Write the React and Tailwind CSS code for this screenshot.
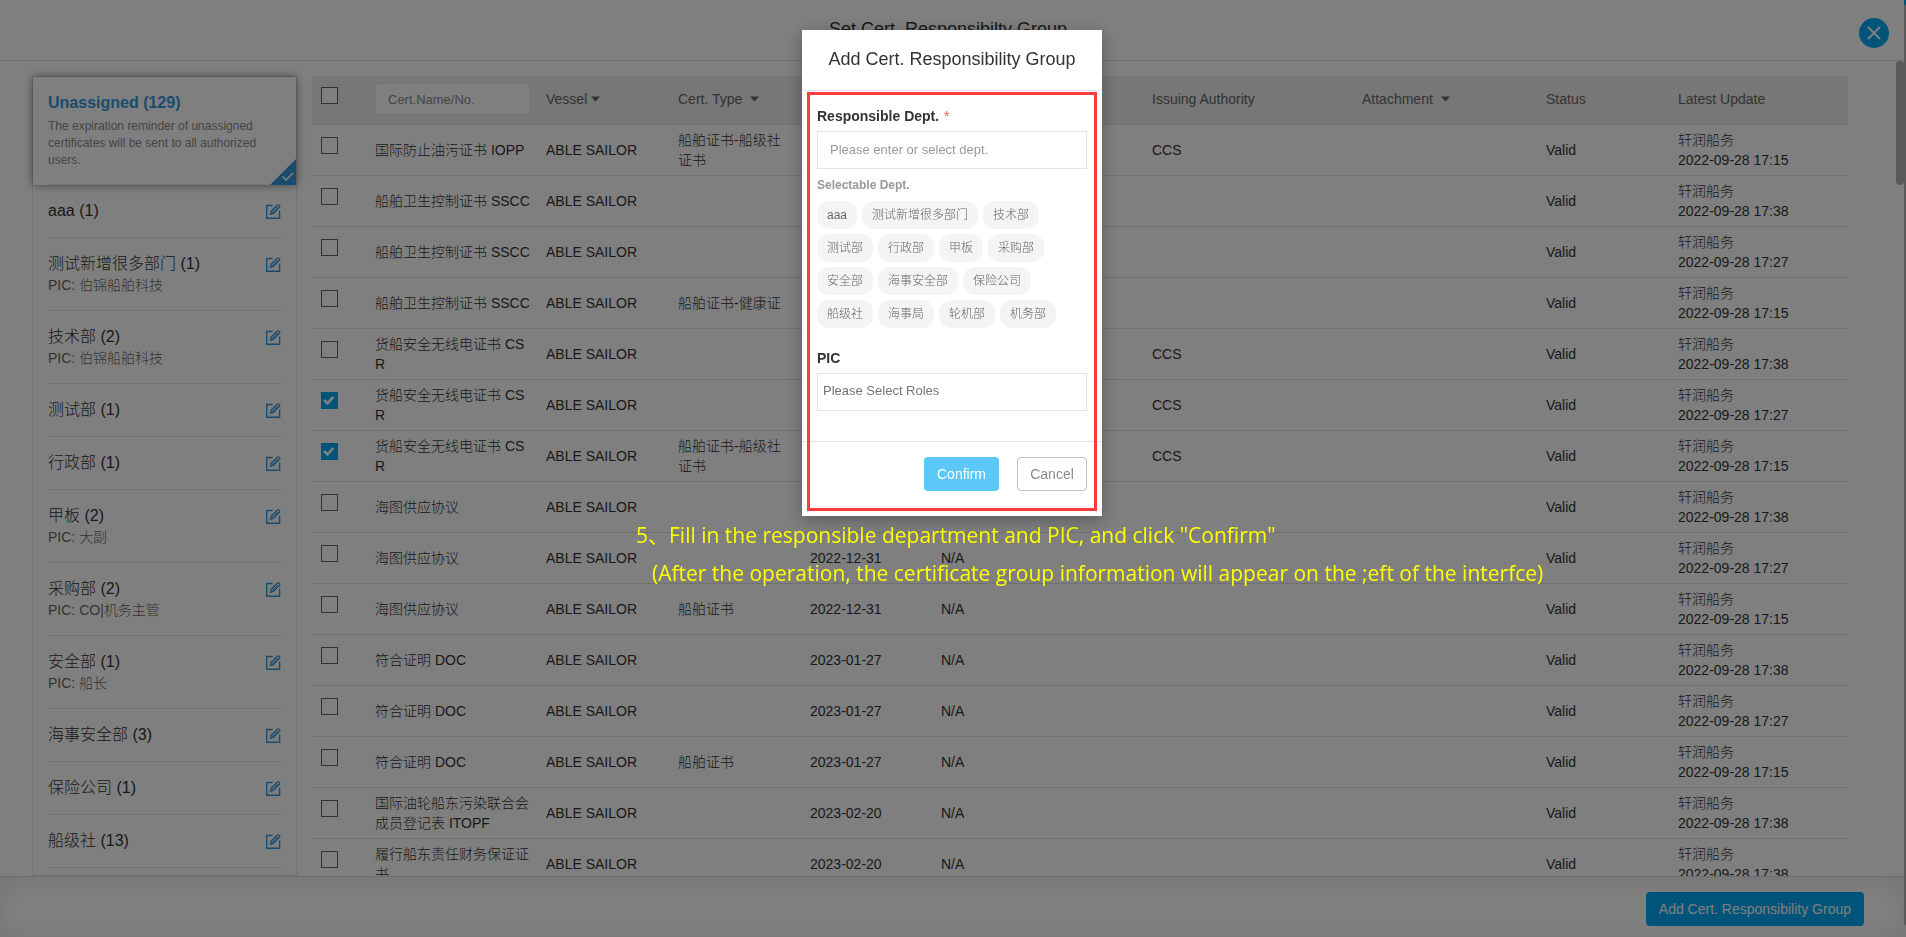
import { useState } from 'react';

const GROUPS = [
    { id: 1, name: 'aaa', count: 1 },
    { id: 2, name: '测试新增很多部门', count: 1, pic: '伯锦船舶科技' },
    { id: 3, name: '技术部', count: 2, pic: '伯锦船舶科技' },
    { id: 4, name: '测试部', count: 1 },
    { id: 5, name: '行政部', count: 1 },
    { id: 6, name: '甲板', count: 2, pic: '大副' },
    { id: 7, name: '采购部', count: 2, pic: 'CO|机务主管' },
    { id: 8, name: '安全部', count: 1, pic: '船长' },
    { id: 9, name: '海事安全部', count: 3 },
    { id: 10, name: '保险公司', count: 1 },
    { id: 11, name: '船级社', count: 13 },
];

const CERTS = [
    { id: 1, name: '国际防止油污证书 IOPP', type: '船舶证书-船级社证书', authority: 'CCS', time: '17:15' },
    { id: 2, name: '船舶卫生控制证书 SSCC', time: '17:38' },
    { id: 3, name: '船舶卫生控制证书 SSCC', time: '17:27' },
    { id: 4, name: '船舶卫生控制证书 SSCC', type: '船舶证书-健康证', time: '17:15' },
    { id: 5, name: '货船安全无线电证书 CSR', authority: 'CCS', time: '17:38' },
    { id: 6, name: '货船安全无线电证书 CSR', authority: 'CCS', time: '17:27' },
    { id: 7, name: '货船安全无线电证书 CSR', type: '船舶证书-船级社证书', authority: 'CCS', time: '17:15' },
    { id: 8, name: '海图供应协议', expiry: '2022-12-31', window: 'N/A', time: '17:38' },
    { id: 9, name: '海图供应协议', expiry: '2022-12-31', window: 'N/A', time: '17:27' },
    { id: 10, name: '海图供应协议', type: '船舶证书', expiry: '2022-12-31', window: 'N/A', time: '17:15' },
    { id: 11, name: '符合证明 DOC', expiry: '2023-01-27', window: 'N/A', time: '17:38' },
    { id: 12, name: '符合证明 DOC', expiry: '2023-01-27', window: 'N/A', time: '17:27' },
    { id: 13, name: '符合证明 DOC', type: '船舶证书', expiry: '2023-01-27', window: 'N/A', time: '17:15' },
    { id: 14, name: '国际油轮船东污染联合会成员登记表 ITOPF', expiry: '2023-02-20', window: 'N/A', time: '17:38' },
    { id: 15, name: '履行船东责任财务保证证书', expiry: '2023-02-20', window: 'N/A', time: '17:38' },
];

const DEPTS = [
    'aaa', '测试新增很多部门', '技术部', '测试部', '行政部', '甲板', '采购部',
    '安全部', '海事安全部', '保险公司', '船级社', '海事局', '轮机部', '机务部',
];

function EditIcon() {
    return (
        <svg width="16" height="15" viewBox="0 0 16 15" fill="none" stroke="currentColor" aria-hidden="true">
            <path d="M7.5 1.5H1.7V14.3H14.6V6.5" strokeWidth="1.4" />
            <path d="M5.4 10.3L6.2 7.2L12.3 1.2Q13.3 0.4 14.3 1.4Q15.2 2.4 14.4 3.3L8.4 9.4Z" strokeWidth="1.3" />
            <path d="M11.2 2.4L13.3 4.5M6.6 7.2L8.5 9.2M8 8L11.8 4.2" strokeWidth="1" />
        </svg>
    );
}

function Caret() {
    return (
        <svg width="9" height="6" viewBox="0 0 9 6" fill="currentColor" aria-hidden="true">
            <path d="M0 0.5H9L4.5 5.5Z" />
        </svg>
    );
}

function Checkbox({ label, checked, onChange }) {
    return (
        <label className="relative block size-[17px]">
            <input
                type="checkbox"
                aria-label={label}
                checked={checked}
                onChange={onChange}
                className="peer block size-[17px] appearance-none border border-[#596675] bg-white checked:border-[#00a9f4] checked:bg-[#00a9f4]"
            />
            <svg
                className="pointer-events-none absolute inset-0 hidden peer-checked:block"
                width="17"
                height="17"
                viewBox="0 0 17 17"
                fill="none"
                stroke="#fff"
                strokeWidth="2.6"
                aria-hidden="true"
            >
                <path d="M3 8L6.5 11.3L12.3 5" />
            </svg>
        </label>
    );
}

function Sidebar() {
    return (
        <aside className="w-[265px] shrink-0 border border-[#e6e6e6]">
            <div className="relative bg-white px-[15px] pt-[15px] shadow-[0_0_9px_rgba(0,0,0,0.5)]">
                <div className="h-[93px] border-b border-[#e6e6e6]">
                    <h2 className="text-base leading-[22px] font-bold text-[#3498db]">Unassigned (129)</h2>
                    <p className="mt-1 text-xs leading-[17px] text-[#8a8a8a]">
                        The expiration reminder of unassigned certificates will be sent to all authorized users.
                    </p>
                </div>
                <svg className="absolute right-0 bottom-0" width="26" height="26" viewBox="0 0 26 26" aria-hidden="true">
                    <path d="M26 0V26H0Z" fill="#3498db" />
                    <path d="M12.5 17.5L16 21L23 14" fill="none" stroke="#fff" strokeWidth="1.6" />
                </svg>
            </div>
            <ul className="px-[15px]">
                {GROUPS.map((group) => (
                    <li key={group.id} className="flex justify-between border-b border-[#e6e6e6] py-[15px]">
                        <div>
                            <div className="text-base leading-[22px]">
                                {group.name} ({group.count})
                            </div>
                            {group.pic && (
                                <div className="text-sm leading-5 text-[#666]">PIC: {group.pic}</div>
                            )}
                        </div>
                        <button type="button" aria-label={`Edit ${group.name}`} className="h-[22px] text-[#3498db]">
                            <EditIcon />
                        </button>
                    </li>
                ))}
            </ul>
        </aside>
    );
}

function CertTable() {
    const [selected, setSelected] = useState([6, 7]);
    const [search, setSearch] = useState('');

    const toggle = (id) => {
        setSelected(selected.includes(id) ? selected.filter((item) => item !== id) : [...selected, id]);
    };

    const toggleAll = () => {
        setSelected(selected.length === CERTS.length ? [] : CERTS.map((cert) => cert.id));
    };

    return (
        <table className="w-full table-fixed border-separate border-spacing-0 text-sm leading-5">
            <colgroup>
                <col className="w-[55px]" />
                <col className="w-[171px]" />
                <col className="w-[132px]" />
                <col className="w-[132px]" />
                <col className="w-[131px]" />
                <col className="w-[211px]" />
                <col className="w-[210px]" />
                <col className="w-[184px]" />
                <col className="w-[132px]" />
                <col className="w-[178px]" />
            </colgroup>
            <thead>
                <tr className="h-[49px] bg-[#eee] text-left text-[#666] *:border-b *:border-[#e0e0e0] *:px-2 *:pb-[2px] *:font-normal">
                    <th>
                        <div className="pb-2 pl-px">
                            <Checkbox
                                label="Select all"
                                checked={selected.length === CERTS.length}
                                onChange={toggleAll}
                            />
                        </div>
                    </th>
                    <th>
                        <input
                            type="text"
                            aria-label="Cert.Name/No."
                            placeholder="Cert.Name/No."
                            value={search}
                            onChange={(e) => setSearch(e.target.value)}
                            className="block h-8 w-full rounded border border-[#e6e6e6] bg-white px-3 text-[13px] placeholder:text-[#8a8a8a]"
                        />
                    </th>
                    <th>
                        <button type="button" className="flex items-center gap-1">
                            Vessel <Caret />
                        </button>
                    </th>
                    <th>
                        <button type="button" className="flex items-center gap-2">
                            Cert. Type <Caret />
                        </button>
                    </th>
                    <th />
                    <th />
                    <th>Issuing Authority</th>
                    <th>
                        <button type="button" className="flex items-center gap-2">
                            Attachment <Caret />
                        </button>
                    </th>
                    <th>Status</th>
                    <th>Latest Update</th>
                </tr>
            </thead>
            <tbody>
                {CERTS.map((cert) => (
                    <tr key={cert.id} className="h-[51px] *:border-b *:border-[#e0e0e0] *:px-2 *:break-all">
                        <td>
                            <div className="pb-[10px] pl-px">
                                <Checkbox
                                    label={`Select ${cert.name}`}
                                    checked={selected.includes(cert.id)}
                                    onChange={() => toggle(cert.id)}
                                />
                            </div>
                        </td>
                        <td>{cert.name}</td>
                        <td>ABLE SAILOR</td>
                        <td>{cert.type}</td>
                        <td>{cert.expiry}</td>
                        <td>{cert.window}</td>
                        <td>{cert.authority}</td>
                        <td />
                        <td>Valid</td>
                        <td>
                            轩润船务
                            <br />
                            2022-09-28 {cert.time}
                        </td>
                    </tr>
                ))}
            </tbody>
        </table>
    );
}

function AddGroupDialog() {
    const [dept, setDept] = useState('');
    const [pic, setPic] = useState('');

    return (
        <div
            role="dialog"
            aria-labelledby="dialog-title"
            className="relative w-[300px] bg-white shadow-[0_4px_16px_rgba(0,0,0,0.3)]"
        >
            <h2 id="dialog-title" className="border-b border-[#e2e3e6] pb-[2px] text-center text-lg leading-[58px]">
                Add Cert. Responsibility Group
            </h2>
            <div className="h-[350px] px-[15px] pt-[15px]">
                <label htmlFor="dept" className="block text-sm leading-5 font-bold">
                    Responsible Dept. <span className="ml-px font-normal text-[#ff5b3a]">*</span>
                </label>
                <input
                    id="dept"
                    type="text"
                    placeholder="Please enter or select dept."
                    value={dept}
                    onChange={(e) => setDept(e.target.value)}
                    className="mt-[5px] block h-[38px] w-full border border-[#e2e3e6] px-3 pb-[2px] text-[13px] placeholder:text-[#999]"
                />
                <p className="mt-[6px] text-xs leading-5 font-bold text-[#999]">Selectable Dept.</p>
                <div className="mt-[6px] flex flex-wrap gap-[5px]">
                    {DEPTS.map((name) => (
                        <button
                            key={name}
                            type="button"
                            onClick={() => setDept(name)}
                            className="h-7 rounded-xl bg-[#f4f4f4] px-[10px] text-xs text-[#666]"
                        >
                            {name}
                        </button>
                    ))}
                </div>
                <label htmlFor="pic" className="mt-5 block text-sm leading-5 font-bold">
                    PIC
                </label>
                <input
                    id="pic"
                    type="text"
                    placeholder="Please Select Roles"
                    value={pic}
                    onChange={(e) => setPic(e.target.value)}
                    className="mt-[5px] block h-[38px] w-full border border-[#e2e3e6] px-[5px] pb-1 text-[13px] placeholder:text-[#757575]"
                />
            </div>
            <div className="flex justify-end gap-[18px] border-t border-[#e2e3e6] px-[15px] pt-[15px] pb-[25px] text-sm">
                <button type="button" className="h-[34px] w-[75px] rounded bg-[#5bc8f8] text-white">
                    Confirm
                </button>
                <button type="button" className="h-[34px] w-[70px] rounded border border-[#c2c2c2] text-[#8a8a8a]">
                    Cancel
                </button>
            </div>
            <div className="pointer-events-none absolute inset-x-[5px] top-[62px] bottom-[5px] border-3 border-[#ff3b3b]" />
        </div>
    );
}

export default function App() {
    return (
        <div className="flex h-screen overflow-hidden bg-white font-['Liberation_Sans','Noto_Sans_CJK_SC',sans-serif] font-light text-[#333]">
            <div className="flex min-w-0 flex-1 flex-col">
                <header className="relative h-[61px] shrink-0 border-b border-[#dcdcdc] pr-2">
                    <h1 className="text-center text-lg leading-[58px]">Set Cert. Responsibilty Group</h1>
                    <button
                        type="button"
                        aria-label="Close"
                        className="absolute top-[18px] right-[15px] flex size-[30px] items-center justify-center rounded-full bg-[#00a9f4]"
                    >
                        <svg width="14" height="14" viewBox="0 0 14 14" stroke="#fff" strokeWidth="2" aria-hidden="true">
                            <path d="M1 1L13 13M13 1L1 13" />
                        </svg>
                    </button>
                </header>
                <main className="relative flex min-h-0 flex-1 gap-[15px] overflow-hidden pt-[15px] pr-14 pl-8">
                    <Sidebar />
                    <div className="min-w-0 flex-1">
                        <CertTable />
                    </div>
                    <div className="absolute top-0 right-0 h-[124px] w-2 rounded-full bg-[#b4b4b4]" />
                </main>
                <footer className="flex h-[61px] shrink-0 items-center justify-end border-t border-[#dcdcdc] pt-1 pr-10 shadow-[inset_0_4px_24px_rgba(0,0,0,0.09)]">
                    <button type="button" className="h-[34px] rounded bg-[#00a9f4] px-[13px] text-sm text-white">
                        Add Cert. Responsibility Group
                    </button>
                </footer>
            </div>
            <div className="flex w-[2px] flex-col bg-[#f0f0f0]">
                <div className="h-[5px] bg-[#00a9f4]" />
                <div className="mb-3 flex-1 bg-[#b4b4b4]" />
            </div>

            <div className="fixed inset-0 flex flex-col items-center bg-black/50 pt-[30px] pr-[2px]">
                <AddGroupDialog />
                <div className="w-[632px] text-[21px] leading-[38px] font-normal whitespace-nowrap text-[#ff0] font-['Open_Sans','Noto_Sans_CJK_SC',sans-serif]">
                    <p>5、Fill in the responsible department and PIC, and click "Confirm"</p>
                    <p className="pl-4">
                        (After the operation, the certificate group information will appear on the ;eft of the interfce)
                    </p>
                </div>
            </div>
        </div>
    );
}
